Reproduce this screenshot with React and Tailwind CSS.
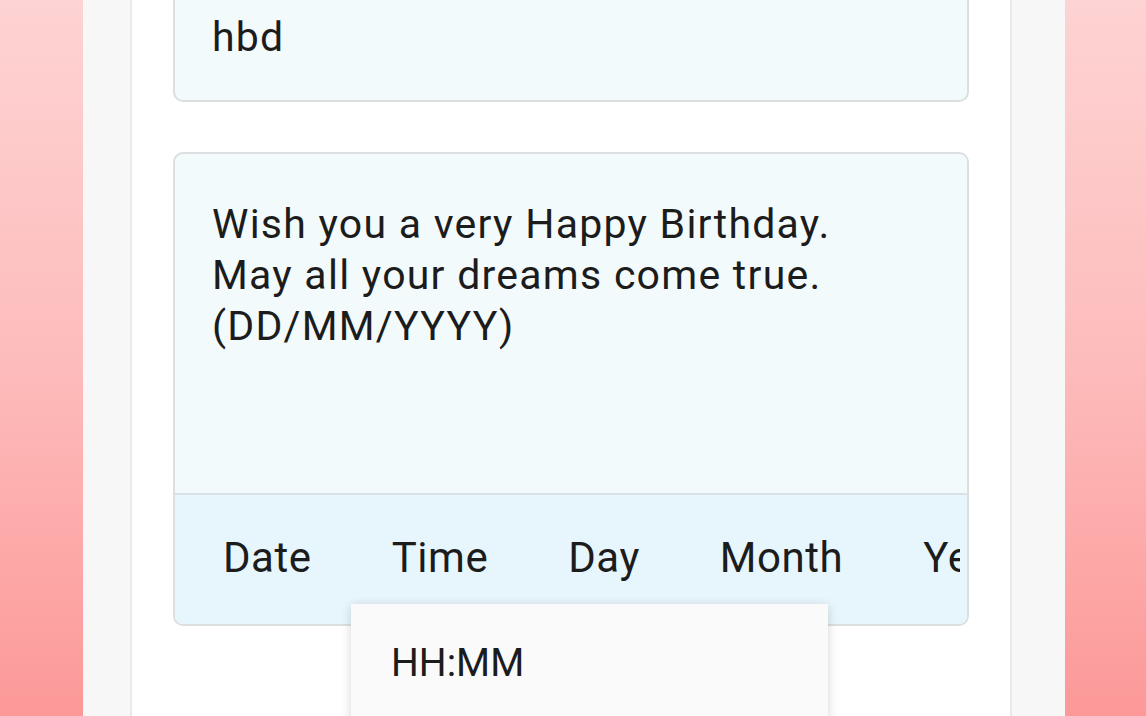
export default function App() {
  const tabs = ["Date", "Time", "Day", "Month", "Year"];
  return (
    <div
      className="relative flex h-[716px] w-[1146px] overflow-hidden text-[#1c1c1c]"
      style={{ fontFamily: "Roboto, 'Liberation Sans', sans-serif" }}
    >
      <div className="w-[83px] shrink-0 bg-linear-to-b from-[#fed3d3] via-[#fdbcbc] to-[#fc9898]" />
      <div className="flex w-[982px] shrink-0">
        <div className="w-[47px] shrink-0 bg-[#f7f7f7]" />
        <div className="w-[2px] shrink-0 bg-[#e9e9e9]" />
        <div className="relative flex w-[878px] shrink-0 flex-col bg-white px-[41px]">
          <div className="-mt-[60px] h-[162px] shrink-0 rounded-[10px] border-2 border-[#dcdfe0] bg-[#f3fafb] px-[37px] pt-[70px]">
            <div className="text-[41px] leading-[51px] tracking-[1.2px]">hbd</div>
          </div>
          <div className="mt-[50px] flex h-[474px] shrink-0 flex-col overflow-hidden rounded-[10px] border-2 border-[#dcdfe0] bg-[#f3fafb]">
            <div className="h-[339px] shrink-0 px-[37px] pt-[45px] text-[41px] leading-[51px] tracking-[1.25px]">
              <div>Wish you a very Happy Birthday.</div>
              <div>May all your dreams come true.</div>
              <div>(DD/MM/YYYY)</div>
            </div>
            <div className="flex h-[131px] shrink-0 items-center border-t-2 border-[#d9e2e6] bg-[#e7f6fc]">
              <div className="-mt-[4px] flex w-[785px] items-center gap-[80px] overflow-hidden whitespace-nowrap pl-[48px] text-[42px] leading-[50px] tracking-[0.55px]">
                {tabs.map((t) => (
                  <span key={t} className="shrink-0">
                    {t}
                  </span>
                ))}
              </div>
            </div>
          </div>
          <div className="absolute left-[219px] top-[604px] h-[140px] w-[477px] bg-[#fafafa] px-[40px] pt-[34px] shadow-[0_2px_10px_rgba(0,0,0,0.16)]">
            <div className="text-[39px] leading-[50px]">HH:MM</div>
          </div>
        </div>
        <div className="w-[2px] shrink-0 bg-[#e9e9e9]" />
        <div className="w-[53px] shrink-0 bg-[#f7f7f7]" />
      </div>
      <div className="w-[81px] shrink-0 bg-linear-to-b from-[#fed3d3] via-[#fdbcbc] to-[#fc9898]" />
    </div>
  );
}
